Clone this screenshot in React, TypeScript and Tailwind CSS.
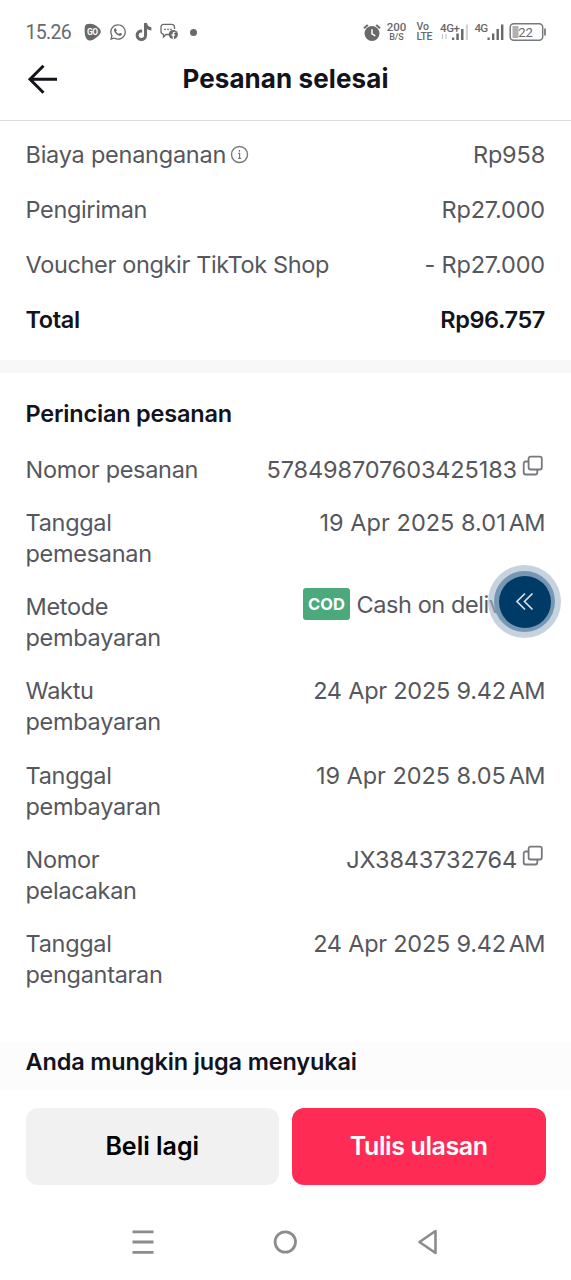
import type { ReactNode } from 'react';
import { FaTiktok, FaWhatsapp } from 'react-icons/fa';

interface DetailRow {
  label: string;
  labelClass?: string;
  value: string;
  valueClass: string;
  copyable?: boolean;
}

const afterCod: DetailRow[] = [
  { label: 'Waktu pembayaran', value: '24 Apr 2025 9.42', valueClass: 'tracking-[-0.24px]' },
  { label: 'Tanggal pembayaran', value: '19 Apr 2025 8.05', valueClass: 'tracking-[-0.04px]' },
  {
    label: 'Nomor pelacakan',
    labelClass: 'pr-[30px]',
    value: 'JX3843732764',
    valueClass: 'tracking-[-0.12px]',
    copyable: true,
  },
  { label: 'Tanggal pengantaran', value: '24 Apr 2025 9.42', valueClass: 'tracking-[-0.24px]' },
];

const CopyIcon = () => (
  <svg className="h-6 w-6 shrink-0" viewBox="0 0 24 24" fill="none" stroke="#77787c" strokeWidth="1.800">
    <rect x="7.600" y="2.600" width="13.200" height="12.900" rx="2" />
    <path d="M7.600 7.500H4.700a2 2 0 0 0-2 2v9a2 2 0 0 0 2 2h9.600a2 2 0 0 0 2-2v-3" />
  </svg>
);

const StatusBar = () => (
  <div className="flex h-[60px] items-start justify-between pt-[20px] pr-[24.500px] pl-[25.500px] font-['Roboto',sans-serif] text-[#68696b]">
    <div className="flex h-6 items-center">
      <span className="w-[58px] text-[19.500px] tracking-[-0.7px]">15.26</span>
      <svg className="mr-[8px] h-[18px] w-[17px]" viewBox="0 0 17 18">
        <path d="M2.500 1.300C6 .2 9.500 .8 12.500 3c3 2.200 4.600 4.100 4.200 6.200-.5 2.600-3.700 5-7.200 7.300-2.400 1.500-5.500 1.400-7-.8C1.300 14 .6 11 .6 7.800.6 4.500.9 2 2.500 1.300Z" fill="#68696b" />
        <text x="8.300" y="11.800" fontSize="8.500" fontWeight="700" fill="#fff" textAnchor="middle" letterSpacing="-0.5">GO</text>
      </svg>
      <FaWhatsapp className="mr-[8px] h-[18px] w-[18px]" />
      <FaTiktok className="mr-[8px] h-[18px] w-[17px]" />
      <svg className="h-[18px] w-[19px]" viewBox="0 0 19 18" fill="none" stroke="#68696b" strokeWidth="1.300">
        <path d="M9 11.500H6L3.500 14v-2.600Q1 11 1 8.600V4.200Q1 1.300 4 1.300h7.500q3 0 3 2.900V6" />
        <circle cx="5" cy="6.300" r="0.9" fill="#68696b" stroke="none" />
        <circle cx="8" cy="6.300" r="0.9" fill="#68696b" stroke="none" />
        <circle cx="11" cy="6.300" r="0.9" fill="#68696b" stroke="none" />
        <circle cx="13.300" cy="11.600" r="4.600" fill="#68696b" stroke="none" />
        <path d="M13.300 16v-5.300q0-1.600 2-1.400M11.500 12h3.600" stroke="#fff" />
      </svg>
      <span className="ml-[11px] h-[7px] w-[7px] rounded-full bg-[#68696b]" />
    </div>
    <div className="flex h-6 items-center">
      <svg className="h-[19px] w-[18px]" viewBox="0 0 18 19" fill="none" stroke="#68696b">
        <circle cx="9" cy="10.500" r="7.500" fill="#68696b" stroke="none" />
        <path d="M1 5.200 4.800 2M17 5.200 13.200 2" strokeWidth="2" />
        <path d="M9 6.200v4.600l3.300 2" stroke="#fff" strokeWidth="1.500" />
      </svg>
      <div className="ml-[6px] w-[20px] text-center font-medium">
        <div className="text-[11.500px] leading-[11px]">200</div>
        <div className="text-[9px] leading-[9px]">B/S</div>
      </div>
      <div className="ml-[10px] w-[18px] text-[10.500px] leading-none font-medium">
        <div>Vo</div>
        <div className="tracking-[-0.4px]">LTE</div>
      </div>
      <svg className="ml-[4px] h-[20px] w-[31px]" viewBox="0 0 31 20" fill="#68696b">
        <text x="1" y="10" fontSize="11.500" fontWeight="500" textLength="20">4G+</text>
        <path d="M3.500 12v5M7 12v5" stroke="#c0c1c3" />
        <path d="M13 15.500h2.200V18H13zM17.300 11.500h2.500V18h-2.500zM22 7h2.500v11H22z" />
        <path d="M26.800 2.500H29V18h-2.200z" fill="#d4d4d6" />
      </svg>
      <svg className="ml-[4px] h-[20px] w-[31px]" viewBox="0 0 31 20" fill="#68696b">
        <text x="0.500" y="10" fontSize="11.500" fontWeight="500" textLength="13.500">4G</text>
        <path d="M13.500 15.500h2.200V18h-2.200zM18 11.500h2.400V18H18zM22.500 7h2.400v11h-2.400zM27 2.500h2.400V18H27z" />
      </svg>
      <svg className="ml-[4px] h-[20px] w-[38px]" viewBox="0 0 38 20">
        <rect x="1.200" y="1.800" width="32.500" height="16.400" rx="3.500" fill="none" stroke="#77787a" strokeWidth="1.500" />
        <path d="M3.500 4h6v12h-6z" fill="#b0b1b3" />
        <path d="M35.200 6.500h1.600v7h-1.600z" fill="#68696b" />
        <text x="16.500" y="14.500" fontSize="13" fill="#68696b" textAnchor="middle">22</text>
      </svg>
    </div>
  </div>
);

const PriceRow = ({ label, value }: { label: ReactNode; value: ReactNode }) => (
  <div className="flex h-[31px] items-center justify-between whitespace-nowrap">
    <div className="flex items-center tracking-[-0.35px]">{label}</div>
    <div className="tracking-[-0.17px]">{value}</div>
  </div>
);

const OrderRow = ({ label, labelClass = '', value, valueClass, copyable }: DetailRow) => (
  <div className="flex items-start justify-between">
    <div className={`w-[150px] tracking-[-0.3px] ${labelClass}`}>{label}</div>
    <div className="flex whitespace-nowrap">
      <span className={valueClass}>{value}</span>
      {copyable ? (
        <span className="ml-[4px]">
          <CopyIcon />
        </span>
      ) : (
        <span className="ml-[3px] tracking-[-0.6px]">AM</span>
      )}
    </div>
  </div>
);

export default function App() {
  return (
    <div className="relative flex h-[1280px] w-[571px] flex-col overflow-hidden bg-white font-['Inter',sans-serif] text-[23.500px] leading-[31px] text-[#56575c]">
      <StatusBar />
      <header className="flex h-[61px] shrink-0 items-start border-b border-[#dcdcdd] pl-[26px] text-[#12131c]">
        <svg className="mt-[3px] h-8 w-8" viewBox="0 0 32 32" fill="none" stroke="currentColor" strokeWidth="3">
          <path d="M31 16.300H4.500M17.500 2.800 4 16.300l13.500 13.500" />
        </svg>
        <h1 className="mt-[3px] ml-[-32px] flex-1 pr-[26px] text-center text-[26px] font-bold tracking-[0.1px]">
          Pesanan selesai
        </h1>
      </header>

      <section className="flex h-[239px] shrink-0 flex-col gap-[24px] pt-[18px] pr-[26px] pl-[25.500px]">
        <PriceRow
          label={
            <>
              <span className="tracking-[-0.24px]">Biaya penanganan</span>
              <svg className="ml-[4px] h-[19px] w-[19px]" viewBox="0 0 19 19" fill="none" stroke="#77787c" strokeWidth="1.400">
                <circle cx="9.500" cy="9.500" r="8" />
                <path d="M8.200 8.300h1.400v5M8 13.300h3.200M9.500 5v1.700" strokeWidth="1.200" />
              </svg>
            </>
          }
          value="Rp958"
        />
        <PriceRow label="Pengiriman" value="Rp27.000" />
        <PriceRow label="Voucher ongkir TikTok Shop" value="- Rp27.000" />
        <PriceRow
          label={<span className="font-semibold text-[#12131c]">Total</span>}
          value={<span className="font-semibold tracking-[-0.4px] text-[#12131c]">Rp96.757</span>}
        />
      </section>

      <div className="h-[13px] shrink-0 bg-[#f8f8f8]" />

      <section className="h-[669px] shrink-0 pt-[24.500px] pr-[26px] pl-[25.500px]">
        <h2 className="font-semibold tracking-[-0.2px] text-[#12131c]">Perincian pesanan</h2>
        <div className="mt-[25.400px] flex flex-col gap-[22.200px]">
          <div className="flex justify-between whitespace-nowrap">
            <span className="tracking-[-0.3px]">Nomor pesanan</span>
            <div className="flex">
              <span className="tracking-[-0.12px]">578498707603425183</span>
              <span className="ml-[4px]">
                <CopyIcon />
              </span>
            </div>
          </div>
          <OrderRow label="Tanggal pemesanan" value="19 Apr 2025 8.01" valueClass="tracking-[0.03px]" />
          <div className="flex items-start justify-between">
            <div className="w-[150px] tracking-[-0.3px]">Metode pembayaran</div>
            <div className="mt-[-3px] flex w-[242px] items-center gap-[6.500px] whitespace-nowrap">
              <span className="h-8 w-[47px] shrink-0 rounded-[3px] bg-[#4aaa7c] text-center text-[16.500px] leading-8 font-bold text-white">
                COD
              </span>
              <span className="tracking-[-0.42px]">Cash on delivery</span>
            </div>
          </div>
          {afterCod.map((row) => (
            <OrderRow key={row.label} {...row} />
          ))}
        </div>
      </section>

      <h2 className="h-[48px] shrink-0 bg-[#fcfcfc] px-[25.500px] pt-[4px] font-semibold tracking-[-0.14px] text-[#12131c]">
        Anda mungkin juga menyukai
      </h2>

      <footer className="shrink-0 bg-white">
        <div className="grid h-[95px] grid-cols-2 gap-[13px] px-[25.500px] pt-[18px] text-[25px] font-semibold">
          <button className="h-[77px] rounded-[12px] bg-[#f1f1f1] text-black">Beli lagi</button>
          <button className="h-[77px] rounded-[12px] bg-[#fe2c55] tracking-[-0.4px] text-white">Tulis ulasan</button>
        </div>
        <div className="flex h-[95px] items-center justify-between pt-[18px] pr-[129.500px] pl-[128.500px]">
          <svg className="h-7 w-7" viewBox="0 0 28 28" stroke="#8c8c8c" strokeWidth="2.800">
            <path d="M3.500 3.800h21M3.500 14h21M3.500 24.300h21" />
          </svg>
          <svg className="h-7 w-7" viewBox="0 0 28 28" fill="none" stroke="#8c8c8c" strokeWidth="2.800">
            <circle cx="14.300" cy="14" r="10.200" />
          </svg>
          <svg className="h-7 w-7" viewBox="0 0 28 28" fill="none" stroke="#8c8c8c" strokeWidth="2.600" strokeLinejoin="round">
            <path d="M21.500 3v22L5.500 14z" />
          </svg>
        </div>
      </footer>

      <button className="absolute top-[565px] left-[488px] flex h-[73px] w-[73px] items-center justify-center rounded-full bg-[#a0b6c8]/60">
        <span className="flex h-[61px] w-[61px] items-center justify-center rounded-full bg-[#7597b3]">
          <span className="flex h-[52px] w-[52px] items-center justify-center rounded-full bg-[#003b67]">
            <svg className="h-6 w-6" viewBox="0 0 24 24" fill="none" stroke="#d5e0ea" strokeWidth="1.700">
              <path d="M12 3.500 4 11.500l8 8M19.500 3.500l-8 8 8 8" />
            </svg>
          </span>
        </span>
      </button>
    </div>
  );
}
